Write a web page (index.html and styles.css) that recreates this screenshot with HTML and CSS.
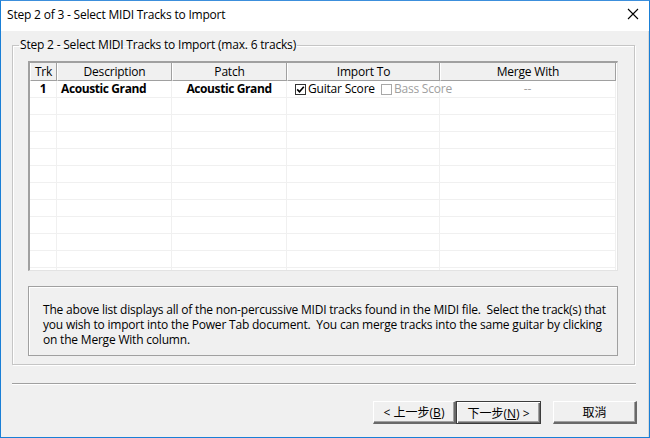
FILE: index.html
```html
<!DOCTYPE html>
<html>
<head>
<meta charset="utf-8">
<link rel="stylesheet" href="styles.css">
</head>
<body>
<div class="window">
  <div class="titlebar">
    <span class="title">Step 2 of 3 - Select MIDI Tracks to Import</span>
    <svg class="close" width="12" height="12" viewBox="0 0 12 12"><path d="M1 1 L11 11 M11 1 L1 11" stroke="#000" stroke-width="1.1" fill="none"/></svg>
  </div>
  <div class="body">
    <fieldset class="group">
      <legend>Step 2 - Select MIDI Tracks to Import (max. 6 tracks)</legend>
      <div class="list">
        <div class="row hdr">
          <div class="c trk">Trk</div>
          <div class="c">Description</div>
          <div class="c">Patch</div>
          <div class="c">Import To</div>
          <div class="c">Merge With</div>
        </div>
        <div class="rows">
          <div class="row">
            <div class="c trk b">1</div>
            <div class="c b left">Acoustic Grand</div>
            <div class="c b">Acoustic Grand</div>
            <div class="c left imp"><span class="cb on"><svg width="9" height="9" viewBox="0 0 9 9"><path d="M1.2 4.4 L3.5 6.8 L7.8 1.8" stroke="#000" stroke-width="1.6" fill="none"/></svg></span><span class="lbl">Guitar Score</span><span class="cb"></span><span class="lbl dim">Bass Score</span></div>
            <div class="c dim">--</div>
          </div>
          <div class="row"><div class="c trk"></div><div class="c"></div><div class="c"></div><div class="c"></div><div class="c"></div></div>
          <div class="row"><div class="c trk"></div><div class="c"></div><div class="c"></div><div class="c"></div><div class="c"></div></div>
          <div class="row"><div class="c trk"></div><div class="c"></div><div class="c"></div><div class="c"></div><div class="c"></div></div>
          <div class="row"><div class="c trk"></div><div class="c"></div><div class="c"></div><div class="c"></div><div class="c"></div></div>
          <div class="row"><div class="c trk"></div><div class="c"></div><div class="c"></div><div class="c"></div><div class="c"></div></div>
          <div class="row"><div class="c trk"></div><div class="c"></div><div class="c"></div><div class="c"></div><div class="c"></div></div>
          <div class="row"><div class="c trk"></div><div class="c"></div><div class="c"></div><div class="c"></div><div class="c"></div></div>
          <div class="row"><div class="c trk"></div><div class="c"></div><div class="c"></div><div class="c"></div><div class="c"></div></div>
          <div class="row"><div class="c trk"></div><div class="c"></div><div class="c"></div><div class="c"></div><div class="c"></div></div>
          <div class="row"><div class="c trk"></div><div class="c"></div><div class="c"></div><div class="c"></div><div class="c"></div></div>
          <div class="row"><div class="c trk"></div><div class="c"></div><div class="c"></div><div class="c"></div><div class="c"></div></div>
        </div>
      </div>
      <div class="info">
        <div class="line">The above list displays all of the non-percussive MIDI tracks found in the MIDI file.&nbsp; Select the track(s) that</div>
        <div class="line">you wish to import into the Power Tab document.&nbsp; You can merge tracks into the same guitar by clicking</div>
        <div class="line">on the Merge With column.</div>
      </div>
    </fieldset>
    <div class="sep"></div>
    <div class="buttons">
      <button class="btn w1">&lt; 上一步(<u>B</u>)</button>
      <button class="btn w2 def">下一步(<u>N</u>) &gt;</button>
      <button class="btn w3">取消</button>
    </div>
  </div>
</div>
</body>
</html>
```
FILE: styles.css
```css
* { box-sizing: border-box; }
html, body { margin: 0; padding: 0; }
body {
  font-family: "Open Sans", "Noto Sans", "Noto Sans CJK TC", sans-serif;
  font-size: 12px;
  color: #000;
  background: #fff;
}
.window {
  width: 650px;
  height: 438px;
  border: 1px solid #1a7fd6;
  border-top-color: #3c8fdc;
  display: flex;
  flex-direction: column;
  background: #f0f0f0;
}
.titlebar {
  height: 30px;
  background: #fff;
  display: flex;
  align-items: center;
  justify-content: space-between;
  padding: 0 10px 4px 6px;
  flex: none;
}
.title { font-size: 12px; letter-spacing: -0.2px; }
.close { display: block; }
.body {
  flex: 1;
  display: flex;
  flex-direction: column;
  padding: 6px 13px 0 11px;
  border-right: 1px solid #dadada;
}
.group {
  margin: 0;
  padding: 8px 16px 8px 15px;
  border: 1px solid #c5c5c5;
  box-shadow: inset 1px 1px 0 #fff, 1px 1px 0 #fff;
  display: flex;
  flex-direction: column;
  gap: 15px;
}
.group legend {
  padding: 0 1px;
  margin-left: -9px;
  line-height: 16px;
  letter-spacing: -0.2px;
}
.list {
  height: 210px;
  background: #fff;
  border-style: solid;
  border-width: 2px 1px 1px 2px;
  border-color: #a0a0a0 #e3e3e3 #e3e3e3 #a0a0a0;
  display: flex;
  flex-direction: column;
  overflow: hidden;
}
.row {
  display: grid;
  grid-template-columns: 27px 115px 115px 153px 176px;
  height: 17px;
  flex: none;
}
.rows { flex: 1; overflow: hidden; }
.c {
  border-right: 1px solid #f0f0f0;
  border-bottom: 1px solid #f0f0f0;
  text-align: center;
  line-height: 16px;
  white-space: nowrap;
  letter-spacing: -0.2px;
}
.hdr { height: 18px; }
.hdr .c {
  background: #f0f0f0;
  border-right: 1px solid #a0a0a0;
  border-bottom: 1px solid #a0a0a0;
  border-left: 1px solid #fff;
  line-height: 17px;
}
.b { font-weight: bold; letter-spacing: -0.4px; }
.left { text-align: left; padding-left: 4px; }
.imp {
  display: flex;
  align-items: center;
  padding-left: 8px;
  overflow: visible;
}
.imp > span { flex: none; }
.cb {
  width: 11px;
  height: 11px;
  border: 1px solid #a8a8a8;
  background: #fff;
  margin-right: 2px;
  margin-left: 6px;
  display: flex;
  align-items: center;
  justify-content: center;
}
.cb.on { border-color: #333; margin-left: 0; }
.cb svg { display: block; }
.dim { color: #a0a0a0; }
.info {
  height: 70px;
  border: 1px solid #a0a0a0;
  box-shadow: inset 1px 1px 0 #fff;
  padding: 15px 0 0 14px;
  letter-spacing: -0.2px;
  white-space: nowrap;
}
.line { height: 15px; line-height: 15px; }
.sep {
  margin-top: 18px;
  margin-right: -1px;
  height: 2px;
  border-top: 1px solid #a0a0a0;
  border-bottom: 1px solid #fff;
}
.buttons {
  display: flex;
  justify-content: flex-end;
  margin-top: 16px;
  margin-right: -2px;
}
.btn {
  font-family: "Open Sans", "Noto Sans CJK TC", sans-serif;
  font-size: 12px;
  height: 23px;
  background: #f0f0f0;
  border-style: solid;
  border-width: 1px 2px 2px 1px;
  border-color: #fff #696969 #696969 #fff;
  box-shadow: inset -1px -1px 0 #a0a0a0;
  padding: 0;
  color: #000;
}
.w1 { width: 83px; }
.w2 { width: 85px; margin-right: 12px; }
.w3 { width: 84px; }
.def {
  border: 1px solid #3c3c3c;
  box-shadow: inset 1px 1px 0 #fff, inset -1px -1px 0 #696969, inset -2px -2px 0 #a0a0a0;
}
```
